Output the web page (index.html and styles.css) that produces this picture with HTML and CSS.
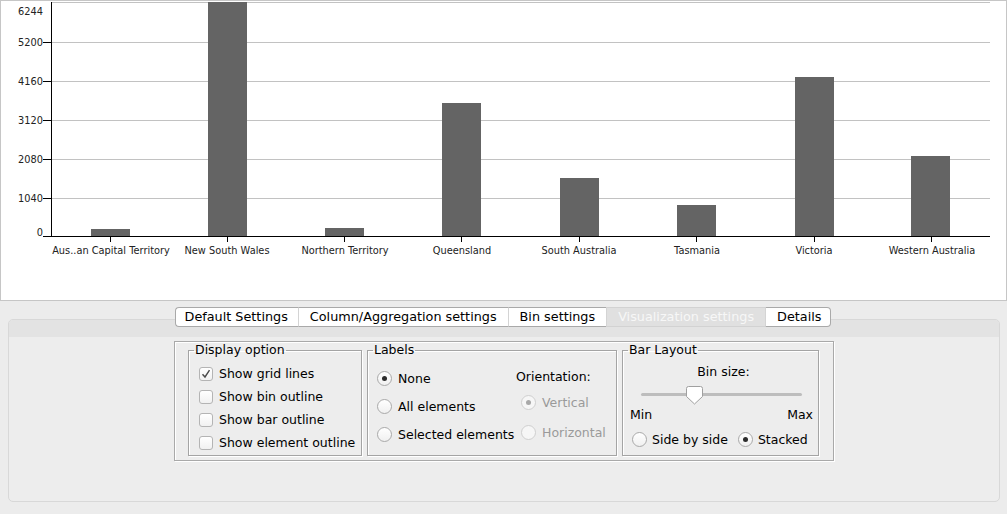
FILE: index.html
```html
<!DOCTYPE html>
<html>
<head>
<meta charset="utf-8">
<link rel="stylesheet" href="styles.css">
</head>
<body>
<div class="chart">
  <svg class="plot" viewBox="1 1 1005 299" width="1005" height="299">
    <g class="grid">
      <line x1="51" y1="2.5" x2="990" y2="2.5"/>
      <line x1="51" y1="42.5" x2="990" y2="42.5"/>
      <line x1="51" y1="81.5" x2="990" y2="81.5"/>
      <line x1="51" y1="120.5" x2="990" y2="120.5"/>
      <line x1="51" y1="159.5" x2="990" y2="159.5"/>
      <line x1="51" y1="198.5" x2="990" y2="198.5"/>
    </g>
    <g class="bars">
      <rect x="91" y="229" width="39" height="7"/>
      <rect x="208" y="2" width="39" height="234"/>
      <rect x="325" y="228" width="39" height="8"/>
      <rect x="442" y="103" width="39" height="133"/>
      <rect x="560" y="178" width="39" height="58"/>
      <rect x="677" y="205" width="39" height="31"/>
      <rect x="795" y="77" width="39" height="159"/>
      <rect x="911" y="156" width="39" height="80"/>
    </g>
    <g class="axis">
      <line x1="51.5" y1="2" x2="51.5" y2="236.5"/>
      <line x1="51" y1="236.5" x2="990" y2="236.5"/>
      <line x1="43" y1="42.5" x2="51" y2="42.5"/>
      <line x1="43" y1="81.5" x2="51" y2="81.5"/>
      <line x1="43" y1="120.5" x2="51" y2="120.5"/>
      <line x1="43" y1="159.5" x2="51" y2="159.5"/>
      <line x1="43" y1="198.5" x2="51" y2="198.5"/>
      <line x1="43" y1="236.5" x2="51" y2="236.5"/>
      <line x1="110.5" y1="236" x2="110.5" y2="242"/>
      <line x1="227.5" y1="236" x2="227.5" y2="242"/>
      <line x1="344.5" y1="236" x2="344.5" y2="242"/>
      <line x1="461.5" y1="236" x2="461.5" y2="242"/>
      <line x1="579.5" y1="236" x2="579.5" y2="242"/>
      <line x1="696.5" y1="236" x2="696.5" y2="242"/>
      <line x1="814.5" y1="236" x2="814.5" y2="242"/>
      <line x1="931.5" y1="236" x2="931.5" y2="242"/>
    </g>
    <g class="ylabels">
      <text x="43" y="14.5">6244</text>
      <text x="43" y="46">5200</text>
      <text x="43" y="85">4160</text>
      <text x="43" y="124">3120</text>
      <text x="43" y="163">2080</text>
      <text x="43" y="202">1040</text>
      <text x="43" y="236">0</text>
    </g>
    <g class="xlabels">
      <text x="111" y="254">Aus..an Capital Territory</text>
      <text x="227" y="254">New South Wales</text>
      <text x="345" y="254">Northern Territory</text>
      <text x="462" y="254">Queensland</text>
      <text x="579" y="254">South Australia</text>
      <text x="697" y="254">Tasmania</text>
      <text x="814" y="254">Victoria</text>
      <text x="932" y="254">Western Australia</text>
    </g>
  </svg>
</div>
<div class="settings">
  <div class="tabs">
    <span class="tab">Default Settings</span>
    <span class="tab">Column/Aggregation settings</span>
    <span class="tab">Bin settings</span>
    <span class="tab active">Visualization settings</span>
    <span class="tab">Details</span>
  </div>
  <div class="panel">
    <div class="panel-head"></div>
    <div class="panel-body">
      <div class="box">
        <fieldset class="group g-display">
          <legend>Display option</legend>
          <div class="gbody display-body">
            <div class="row"><span class="cb on"><svg viewBox="0 0 14 14" width="14" height="14"><path d="M3.5 7.2 L6 10 L10.5 3.2"/></svg></span>Show grid lines</div>
            <div class="row"><span class="cb"></span>Show bin outline</div>
            <div class="row"><span class="cb"></span>Show bar outline</div>
            <div class="row"><span class="cb"></span>Show element outline</div>
          </div>
        </fieldset>
        <fieldset class="group g-labels">
          <legend>Labels</legend>
          <div class="gbody labels-body">
            <div class="col">
              <div class="lrow"><span class="radio on"></span>None</div>
              <div class="lrow"><span class="radio"></span>All elements</div>
              <div class="lrow"><span class="radio"></span>Selected elements</div>
            </div>
            <div class="col orient">
              <div class="orow title">Orientation:</div>
              <div class="orow mid disabled"><span class="radio on"></span>Vertical</div>
              <div class="orow disabled"><span class="radio"></span>Horizontal</div>
            </div>
          </div>
        </fieldset>
        <fieldset class="group g-layout">
          <legend>Bar Layout</legend>
          <div class="gbody layout-body">
            <div class="binsize">Bin size:</div>
            <div class="slider">
              <div class="track"></div>
              <svg class="thumb" viewBox="0 0 17 19" width="17" height="19"><path d="M2.5 0.5 H14.5 Q16.5 0.5 16.5 2.5 V10.5 L8.5 18 L0.5 10.5 V2.5 Q0.5 0.5 2.5 0.5 Z"/></svg>
            </div>
            <div class="minmax"><span>Min</span><span>Max</span></div>
            <div class="layout-radios">
              <span class="opt"><span class="radio"></span>Side by side</span>
              <span class="opt"><span class="radio on"></span>Stacked</span>
            </div>
          </div>
        </fieldset>
      </div>
    </div>
  </div>
</div>
</body>
</html>
```
FILE: styles.css
```css
* { box-sizing: border-box; }
html, body { margin: 0; padding: 0; }
body {
  width: 1007px;
  height: 514px;
  overflow: hidden;
  background: #ececec;
  font-family: "DejaVu Sans", "Liberation Sans", sans-serif;
  color: #000;
}
.chart {
  width: 1007px;
  height: 301px;
  background: #fff;
  border: 1px solid #c6c6c6;
}
.plot { display: block; }
.grid line { stroke: #c2c2c2; stroke-width: 1; }
.bars rect { fill: #646464; }
.axis line { stroke: #000; stroke-width: 1; }
.ylabels text, .xlabels text {
  font-family: "DejaVu Sans", sans-serif;
  font-size: 9.8px;
  fill: #222;
}
.ylabels text { text-anchor: end; }
.xlabels text { text-anchor: middle; }

.settings {
  padding: 6px 7px 0 8px;
}
.tabs {
  position: relative;
  z-index: 1;
  display: flex;
  justify-content: center;
  padding-right: 2px;
}
.tab {
  height: 20px;
  line-height: 18px;
  font-size: 12.8px;
  padding: 0 11px;
  background: #fff;
  border-top: 1px solid #a9a9a9;
  border-bottom: 1px solid #a9a9a9;
  border-left: 1px solid #d4d4d4;
  white-space: nowrap;
}
.tab:first-child { border-left: 1px solid #a9a9a9; border-radius: 4px 0 0 4px; padding-left: 9px; padding-right: 10px; }
.tab:last-child { border-right: 1px solid #a9a9a9; border-radius: 0 4px 4px 0; padding-left: 11px; padding-right: 9px; }
.tab.active {
  background: #e0e0e0;
  color: #f7f7f7;
  border-top-color: #d2d2d2;
  border-bottom-color: #d2d2d2;
}
.panel {
  margin-top: -8px;
  height: 183px;
  border: 1px solid #d8d8d8;
  border-radius: 5px;
  background: #ededed;
  overflow: hidden;
}
.panel-head {
  height: 17px;
  background: #e3e3e3;
}
.panel-body {
  display: flex;
  justify-content: center;
  padding-top: 4px;
}
.box {
  width: 660px;
  height: 120px;
  border: 1px solid #a9a9a9;
  box-shadow: inset 1px 1px 0 #fff, 1px 1px 0 #fff;
  display: flex;
  gap: 5px;
  padding: 1px 0 4px 13px;
  font-size: 12.5px;
}
.group {
  margin: 0;
  padding: 0;
  border: 1px solid #a4a4a4;
  box-shadow: inset 1px 1px 0 #fff, 1px 1px 0 #fff;
  min-width: 0;
}
.group legend {
  margin-left: 5px;
  padding: 0 1px;
  font-size: 12.5px;
  line-height: 14px;
}
.g-display { width: 174px; }
.g-labels { width: 250px; }
.g-layout { width: 197px; }

.display-body { padding: 5px 0 0 10px; }
.row {
  height: 23px;
  display: flex;
  align-items: center;
  white-space: nowrap;
}
.cb {
  width: 14px;
  height: 14px;
  border: 1px solid #b4b4b4;
  border-radius: 3px;
  background: linear-gradient(#ffffff, #f1f1f1);
  margin-right: 6px;
  flex: none;
  display: flex;
  align-items: center;
  justify-content: center;
}
.cb svg { display: block; margin: -1px; }
.cb svg path { fill: none; stroke: #4a4a4a; stroke-width: 1.4; }

.radio {
  width: 15px;
  height: 15px;
  border-radius: 50%;
  border: 1px solid #a9a9a9;
  background: linear-gradient(#ffffff, #f0f0f0);
  flex: none;
  display: flex;
  align-items: center;
  justify-content: center;
  margin-right: 6px;
}
.radio.on::after {
  content: "";
  width: 5px;
  height: 5px;
  border-radius: 50%;
  background: #2c2c2c;
}
.disabled { color: #9a9a9a; }
.disabled .radio { border-color: #cfcfcf; background: #f6f6f6; }
.disabled .radio.on::after { background: #a8a8a8; }

.labels-body {
  display: flex;
  padding: 7px 0 0 9px;
}
.labels-body .col:first-child { width: 139px; }
.lrow {
  height: 28px;
  display: flex;
  align-items: center;
  white-space: nowrap;
}
.orient { margin-top: -1px; }
.orow {
  height: 27px;
  display: flex;
  align-items: center;
  white-space: nowrap;
}
.orow.mid { height: 26px; }
.orow.disabled { padding-left: 5px; }
.orow.mid { margin-top: -1px; }
.orow:last-child { margin-top: 4px; }

.layout-body { padding: 7px 5px 0 7px; }
.binsize {
  height: 16px;
  line-height: 16px;
  text-align: center;
  padding-left: 4px;
}
.slider {
  position: relative;
  height: 20px;
  margin: 4px 11px 0 11px;
  display: flex;
  align-items: center;
}
.track {
  width: 100%;
  height: 3px;
  border-radius: 2px;
  background: #bdbdbd;
}
.thumb {
  position: absolute;
  left: 45px;
  top: 2px;
}
.thumb path { fill: #fff; stroke: #a0a0a0; stroke-width: 1; }
.minmax {
  display: flex;
  justify-content: space-between;
  height: 16px;
  line-height: 16px;
  margin-top: 3px;
}
.layout-radios {
  display: flex;
  height: 20px;
  margin-top: 6px;
  padding-left: 2px;
  gap: 10px;
  white-space: nowrap;
}
.opt { display: flex; align-items: center; }
.opt .radio { margin-right: 5px; }
```
